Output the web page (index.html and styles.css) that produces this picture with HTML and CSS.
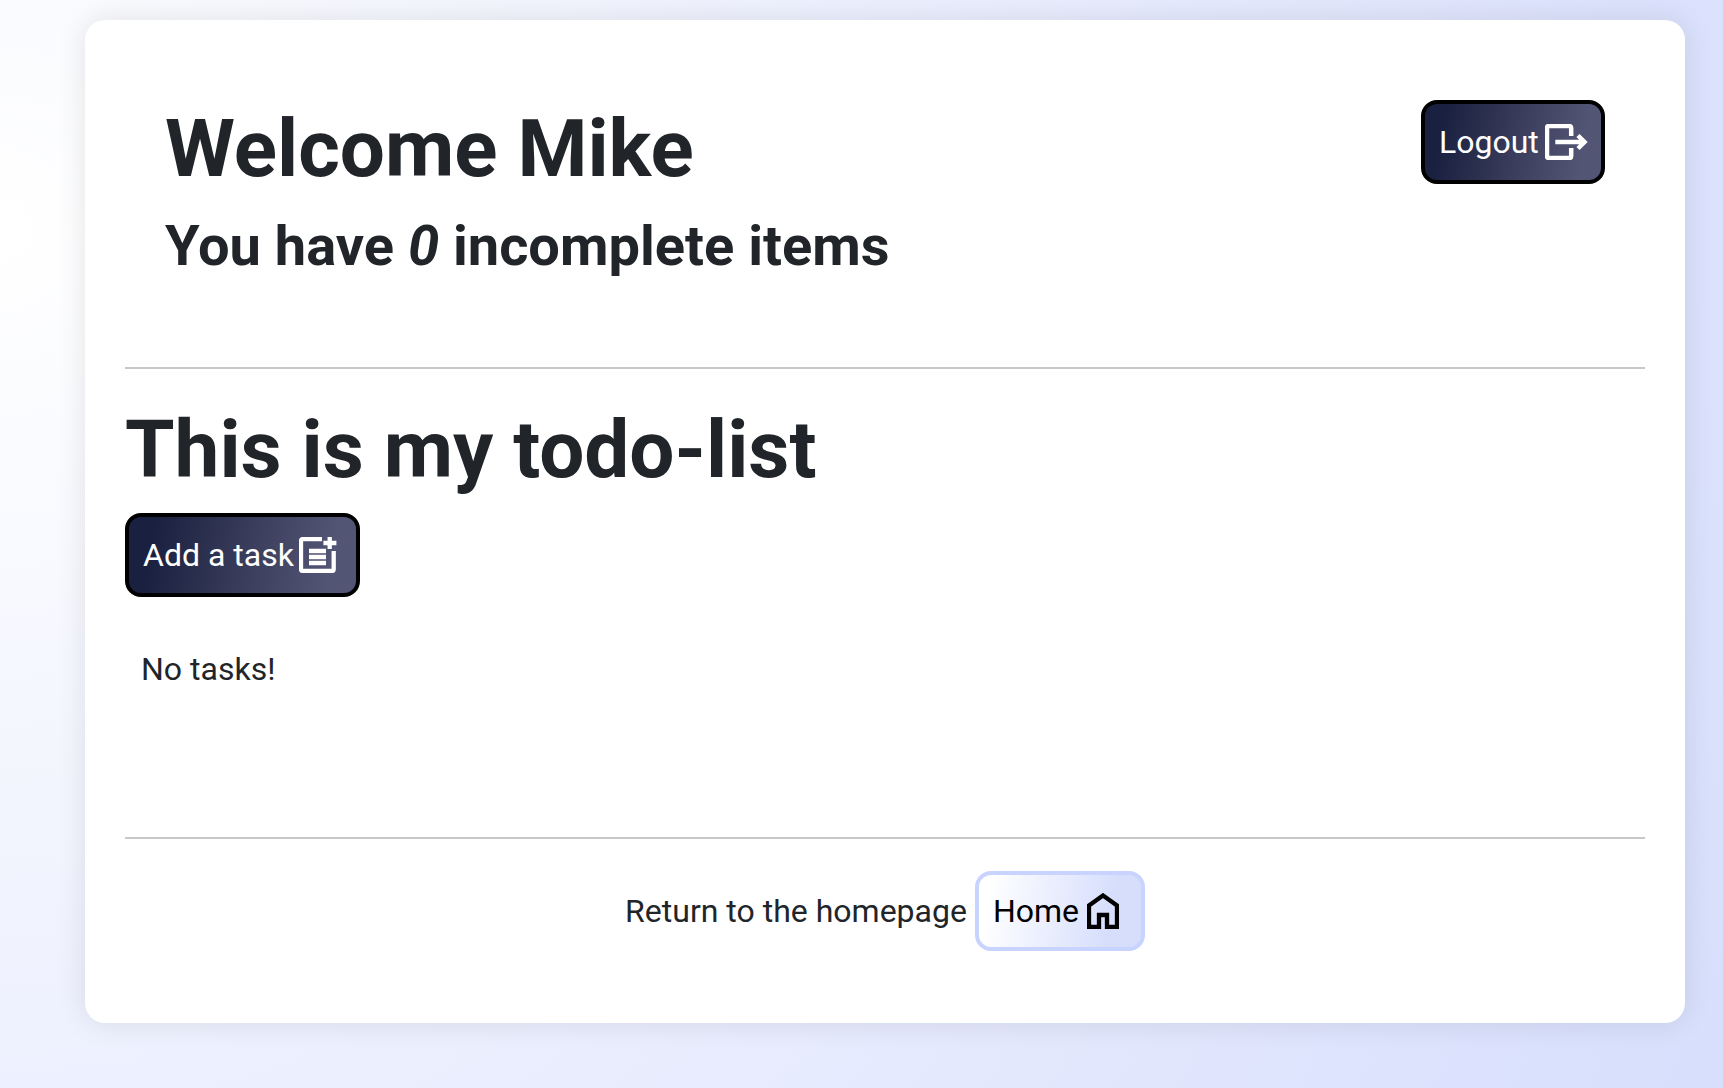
FILE: index.html
```html
<!DOCTYPE html>
<html lang="en">
<head>
<meta charset="utf-8">
<title>Todo list</title>
<link rel="stylesheet" href="styles.css">
</head>
<body>
<main class="card">
  <header class="header">
    <div>
      <h1>Welcome Mike</h1>
      <h2>You have <em>0</em> incomplete items</h2>
    </div>
    <button class="btn btn-dark">Logout<svg class="icon icon-logout" viewBox="0 0 43 36"><path d="M26.200 12V4Q26.200 2 24.200 2H4Q2 2 2 4V32Q2 34 4 34H24.200Q26.200 34 26.200 32V24M10.300 18H39M33 11.500L39.500 18L33 24.500" fill="none" stroke="currentColor" stroke-width="4.500"/></svg></button>
  </header>
  <hr>
  <section class="tasks">
    <h1>This is my todo-list</h1>
    <button class="btn btn-dark btn-add">Add a task<svg class="icon icon-add" viewBox="0 0 38 36"><path d="M23 2H4Q2 2 2 4V32Q2 34 4 34H32.700Q34.700 34 34.700 32V14M10 14H27M10 20H27M10 26H27M30.700 0V12M24.400 6H37.400" fill="none" stroke="currentColor" stroke-width="4.300"/></svg></button>
    <p class="empty">No tasks!</p>
  </section>
  <hr>
  <footer class="footer">
    <span>Return to the homepage</span>
    <button class="btn btn-light">Home<svg class="icon icon-home" viewBox="0 0 32 36"><path d="M2 34V12.500L16 2.500L30 12.500V34H20V22H12V34Z" fill="none" stroke="currentColor" stroke-width="4.300"/></svg></button>
  </footer>
</main>
</body>
</html>
```
FILE: styles.css
```css
* { box-sizing: border-box; }
html { height: 100%; overflow: hidden; }
body {
  margin: 0;
  min-height: 1088px;
  padding: 20px 38px 65px 85px;
  background: radial-gradient(circle 1925px at 0 230px, #ffffff 0%, #dde3fd 84%, #d7dffc 100%);
  color: #212529;
  font: 400 32px/48px Roboto, sans-serif;
}
.card {
  width: 1600px;
  height: 1003px;
  padding: 40px;
  border-radius: 20px;
  background: #fff;
  box-shadow: 0 0 30px rgba(0, 0, 0, .1);
}
.header {
  display: flex;
  justify-content: space-between;
  align-items: flex-start;
  height: 307px;
  padding: 40px;
}
h1, h2 { margin: 0; font-weight: 700; }
h1 { font-size: 80px; line-height: 98px; }
h2 { margin-top: 15px; font-size: 56px; line-height: 67px; }
hr { height: 2px; margin: 0; border: 0; background: #c8c8c8; }
.btn {
  display: flex;
  align-items: center;
  border: 4px solid #000;
  border-radius: 16px;
  padding: 0 14px;
  font: inherit;
}
.btn-dark {
  width: 184px;
  height: 84px;
  color: #fff;
  background: linear-gradient(100deg, #1a2040 11%, #393c5a 51%, #535574 88%);
}
.btn-add { width: 235px; margin-top: 14px; }
.btn-light {
  width: 170px;
  height: 80px;
  border-color: #c8d3ff;
  color: #000;
  background: linear-gradient(100deg, #fff 7%, #d6defc 80%);
}
.icon { flex: none; }
.icon-logout { width: 43px; height: 36px; margin-left: 6px; }
.icon-add { width: 38px; height: 36px; margin-left: 5px; }
.icon-home { width: 32px; height: 36px; margin-left: 8px; }
.tasks { height: 468px; padding-top: 32px; }
.empty { margin: 48px 16px 0; }
.footer {
  display: flex;
  justify-content: center;
  align-items: center;
  gap: 8px;
  padding-top: 32px;
}
```
